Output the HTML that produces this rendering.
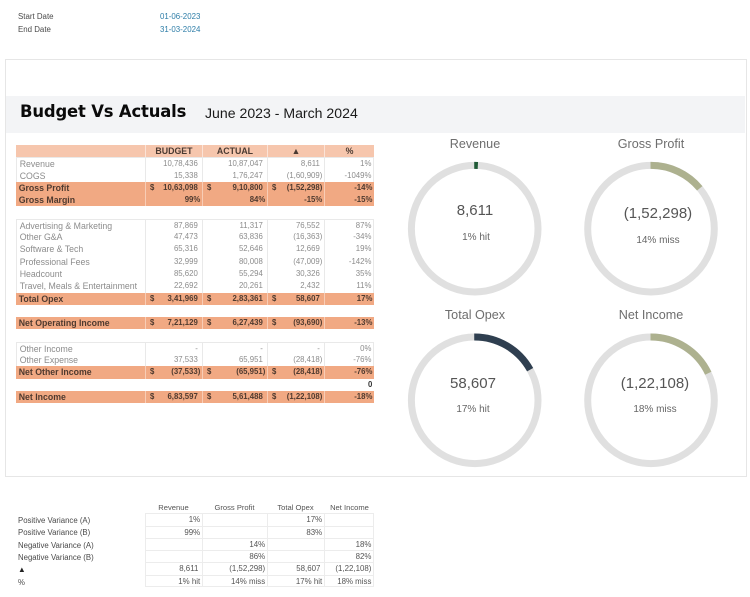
<!DOCTYPE html>
<html><head><meta charset="utf-8">
<style>
html,body{margin:0;padding:0;background:#fff;width:750px;height:597px;overflow:hidden}
body{position:relative;font-family:"Liberation Sans",sans-serif;filter:blur(.3px)}
.a{position:absolute;white-space:nowrap}
table,tbody,tr,td{margin:0;padding:0;border-spacing:0}
table{position:absolute;display:grid;grid-auto-rows:12.3px}
tbody,tr{display:contents}
td{display:block;box-sizing:border-box;white-space:nowrap;overflow:hidden;text-align:right}
#t{left:16.4px;top:145px;width:357.7px;font-size:7.8px;color:#8c8c8c;grid-template-columns:128.6px 57px 65px 57px 50.1px}
#t td{height:12.3px;padding:0 4.2px 0 0;line-height:12.3px}
#t td:first-child{text-align:left;padding-left:2.3px;font-size:8.75px}
#t tr.w td{border-left:1px solid #e9e9e9}
#t tr.w td:last-child{border-right:1px solid #e9e9e9}
#t tr.tp td{border-top:1px solid #e9e9e9}
#t tr.h td{background:#f6c6ad;color:#4a3a32;font-weight:bold;text-align:center;padding:0;border-left:1px solid #fbe3d7;font-size:8.8px}
#t tr.h td:first-child{border-left:0;padding:0}
#t tr.b td{background:#f1a983;color:#4f3a2f;font-weight:bold;border-left:1px solid #f8cdb6}
#t tr.b td:first-child{border-left:0}
#t td.p{padding-right:1.7px}
#t td s{float:left;text-decoration:none;padding-left:4px}
#t tr.z td{color:#333;font-weight:bold}
#b{left:144.9px;top:513.3px;width:229.2px;font-size:7.9px;color:#555;grid-template-columns:57px 65px 57px 50.2px}
#b td{height:12.3px;padding:0 1.7px 0 0;line-height:11.6px;border-left:1px solid #ececec;border-top:1px solid #ececec}
#b td:nth-child(4){border-right:1px solid #ececec}
#b tr:last-child td{border-bottom:1px solid #ececec}
.l{font-size:7.8px;color:#4a4a4a;left:18px;line-height:10px}
.c{font-size:7.6px;color:#555;top:503px;text-align:center;line-height:10px}
.dt{font-size:12.6px;color:#6e6e6e;text-align:center;width:140px;line-height:16px}
.dv{font-size:15px;color:#555;text-align:center;width:140px;line-height:18px}
.ds{font-size:10px;color:#666;text-align:center;width:140px;line-height:12px}
svg{position:absolute;left:0;top:0}
</style></head><body>

<div class="a" style="left:18px;top:12px;font-size:7.9px;line-height:10px;color:#4a4a4a">Start Date</div>
<div class="a" style="left:18px;top:24.5px;font-size:7.9px;line-height:10px;color:#4a4a4a">End Date</div>
<div class="a" style="left:160px;top:12px;font-size:7.9px;line-height:10px;color:#2f7ea8">01-06-2023</div>
<div class="a" style="left:160px;top:24.5px;font-size:7.9px;line-height:10px;color:#2f7ea8">31-03-2024</div>

<div class="a" style="left:5px;top:59px;width:740px;height:416px;border:1px solid #e6e6e6"></div>
<div class="a" style="left:6px;top:96px;width:739px;height:37px;background:#f3f4f6"></div>
<div class="a" style="left:20px;top:100px;font-family:'DejaVu Sans',sans-serif;font-size:16.4px;line-height:24px;font-weight:bold;color:#0a0a0a;letter-spacing:-.15px">Budget Vs Actuals</div>
<div class="a" style="left:205px;top:104px;font-size:14.1px;line-height:18px;color:#1a1a1a">June 2023 - March 2024</div>

<table id="t">
<tr class="h"><td></td><td>BUDGET</td><td>ACTUAL</td><td>▲</td><td>%</td></tr>
<tr class="w tp"><td>Revenue</td><td>10,78,436</td><td>10,87,047</td><td>8,611</td><td class="p">1%</td></tr>
<tr class="w"><td>COGS</td><td>15,338</td><td>1,76,247</td><td class="p">(1,60,909)</td><td class="p">-1049%</td></tr>
<tr class="b"><td>Gross Profit</td><td><s>$</s>10,63,098</td><td><s>$</s>9,10,800</td><td class="p"><s>$</s>(1,52,298)</td><td class="p">-14%</td></tr>
<tr class="b"><td>Gross Margin</td><td class="p">99%</td><td class="p">84%</td><td class="p">-15%</td><td class="p">-15%</td></tr>
<tr class="e"><td></td><td></td><td></td><td></td><td></td></tr>
<tr class="w tp"><td>Advertising &amp; Marketing</td><td>87,869</td><td>11,317</td><td>76,552</td><td class="p">87%</td></tr>
<tr class="w"><td>Other G&amp;A</td><td>47,473</td><td>63,836</td><td class="p">(16,363)</td><td class="p">-34%</td></tr>
<tr class="w"><td>Software &amp; Tech</td><td>65,316</td><td>52,646</td><td>12,669</td><td class="p">19%</td></tr>
<tr class="w"><td>Professional Fees</td><td>32,999</td><td>80,008</td><td class="p">(47,009)</td><td class="p">-142%</td></tr>
<tr class="w"><td>Headcount</td><td>85,620</td><td>55,294</td><td>30,326</td><td class="p">35%</td></tr>
<tr class="w"><td>Travel, Meals &amp; Entertainment</td><td>22,692</td><td>20,261</td><td>2,432</td><td class="p">11%</td></tr>
<tr class="b"><td>Total Opex</td><td><s>$</s>3,41,969</td><td><s>$</s>2,83,361</td><td><s>$</s>58,607</td><td class="p">17%</td></tr>
<tr class="e"><td></td><td></td><td></td><td></td><td></td></tr>
<tr class="b"><td>Net Operating Income</td><td><s>$</s>7,21,129</td><td><s>$</s>6,27,439</td><td class="p"><s>$</s>(93,690)</td><td class="p">-13%</td></tr>
<tr class="e"><td></td><td></td><td></td><td></td><td></td></tr>
<tr class="w tp"><td>Other Income</td><td>-</td><td>-</td><td>-</td><td class="p">0%</td></tr>
<tr class="w"><td>Other Expense</td><td>37,533</td><td>65,951</td><td class="p">(28,418)</td><td class="p">-76%</td></tr>
<tr class="b"><td>Net Other Income</td><td class="p"><s>$</s>(37,533)</td><td class="p"><s>$</s>(65,951)</td><td class="p"><s>$</s>(28,418)</td><td class="p">-76%</td></tr>
<tr class="e z"><td></td><td></td><td></td><td></td><td class="p">0</td></tr>
<tr class="b"><td>Net Income</td><td><s>$</s>6,83,597</td><td><s>$</s>5,61,488</td><td class="p"><s>$</s>(1,22,108)</td><td class="p">-18%</td></tr>
</table>

<svg width="750" height="597" viewBox="0 0 750 597" fill="none">
<g stroke="#e0e0e0" stroke-width="7">
<circle cx="474.7" cy="228.7" r="63.3"/>
<circle cx="651" cy="228.7" r="63.3"/>
<circle cx="474.7" cy="400.3" r="63.3"/>
<circle cx="651" cy="400.3" r="63.3"/>
</g>
<g stroke-width="7">
<circle cx="474.7" cy="228.7" r="63.3" stroke="#1f5a36" pathLength="100" stroke-dasharray="0.8 99.2" transform="rotate(-90 474.7 228.7)"/>
<circle cx="651" cy="228.7" r="63.3" stroke="#adb18f" pathLength="100" stroke-dasharray="14 86" transform="rotate(-90 651 228.7)"/>
<circle cx="474.7" cy="400.3" r="63.3" stroke="#2f3f50" pathLength="100" stroke-dasharray="17 83" transform="rotate(-90 474.7 400.3)"/>
<circle cx="651" cy="400.3" r="63.3" stroke="#adb18f" pathLength="100" stroke-dasharray="18 82" transform="rotate(-90 651 400.3)"/>
</g>
</svg>

<div class="a dt" style="left:405px;top:136px">Revenue</div>
<div class="a dt" style="left:581px;top:136px">Gross Profit</div>
<div class="a dt" style="left:405px;top:307px">Total Opex</div>
<div class="a dt" style="left:581px;top:307px">Net Income</div>
<div class="a dv" style="left:405px;top:202px">8,611</div>
<div class="a dv" style="left:588px;top:205px">(1,52,298)</div>
<div class="a dv" style="left:403px;top:375px">58,607</div>
<div class="a dv" style="left:585px;top:375px">(1,22,108)</div>
<div class="a ds" style="left:406px;top:232px">1% hit</div>
<div class="a ds" style="left:588px;top:235px">14% miss</div>
<div class="a ds" style="left:403px;top:404px">17% hit</div>
<div class="a ds" style="left:585px;top:404px">18% miss</div>

<div class="a c" style="left:145px;width:57px">Revenue</div>
<div class="a c" style="left:202px;width:65px">Gross Profit</div>
<div class="a c" style="left:267px;width:57px">Total Opex</div>
<div class="a c" style="left:324px;width:51px">Net Income</div>
<div class="a l" style="top:515.5px">Positive Variance (A)</div>
<div class="a l" style="top:528px">Positive Variance (B)</div>
<div class="a l" style="top:540.5px">Negative Variance (A)</div>
<div class="a l" style="top:553px">Negative Variance (B)</div>
<div class="a l" style="top:565px;color:#222">▲</div>
<div class="a l" style="top:577.5px">%</div>
<table id="b">
<tr><td>1%</td><td></td><td>17%</td><td></td></tr>
<tr><td>99%</td><td></td><td>83%</td><td></td></tr>
<tr><td></td><td>14%</td><td></td><td>18%</td></tr>
<tr><td></td><td>86%</td><td></td><td>82%</td></tr>
<tr><td style="padding-right:3.5px">8,611</td><td>(1,52,298)</td><td style="padding-right:3.5px">58,607</td><td>(1,22,108)</td></tr>
<tr><td>1% hit</td><td>14% miss</td><td>17% hit</td><td>18% miss</td></tr>
</table>
</body></html>
